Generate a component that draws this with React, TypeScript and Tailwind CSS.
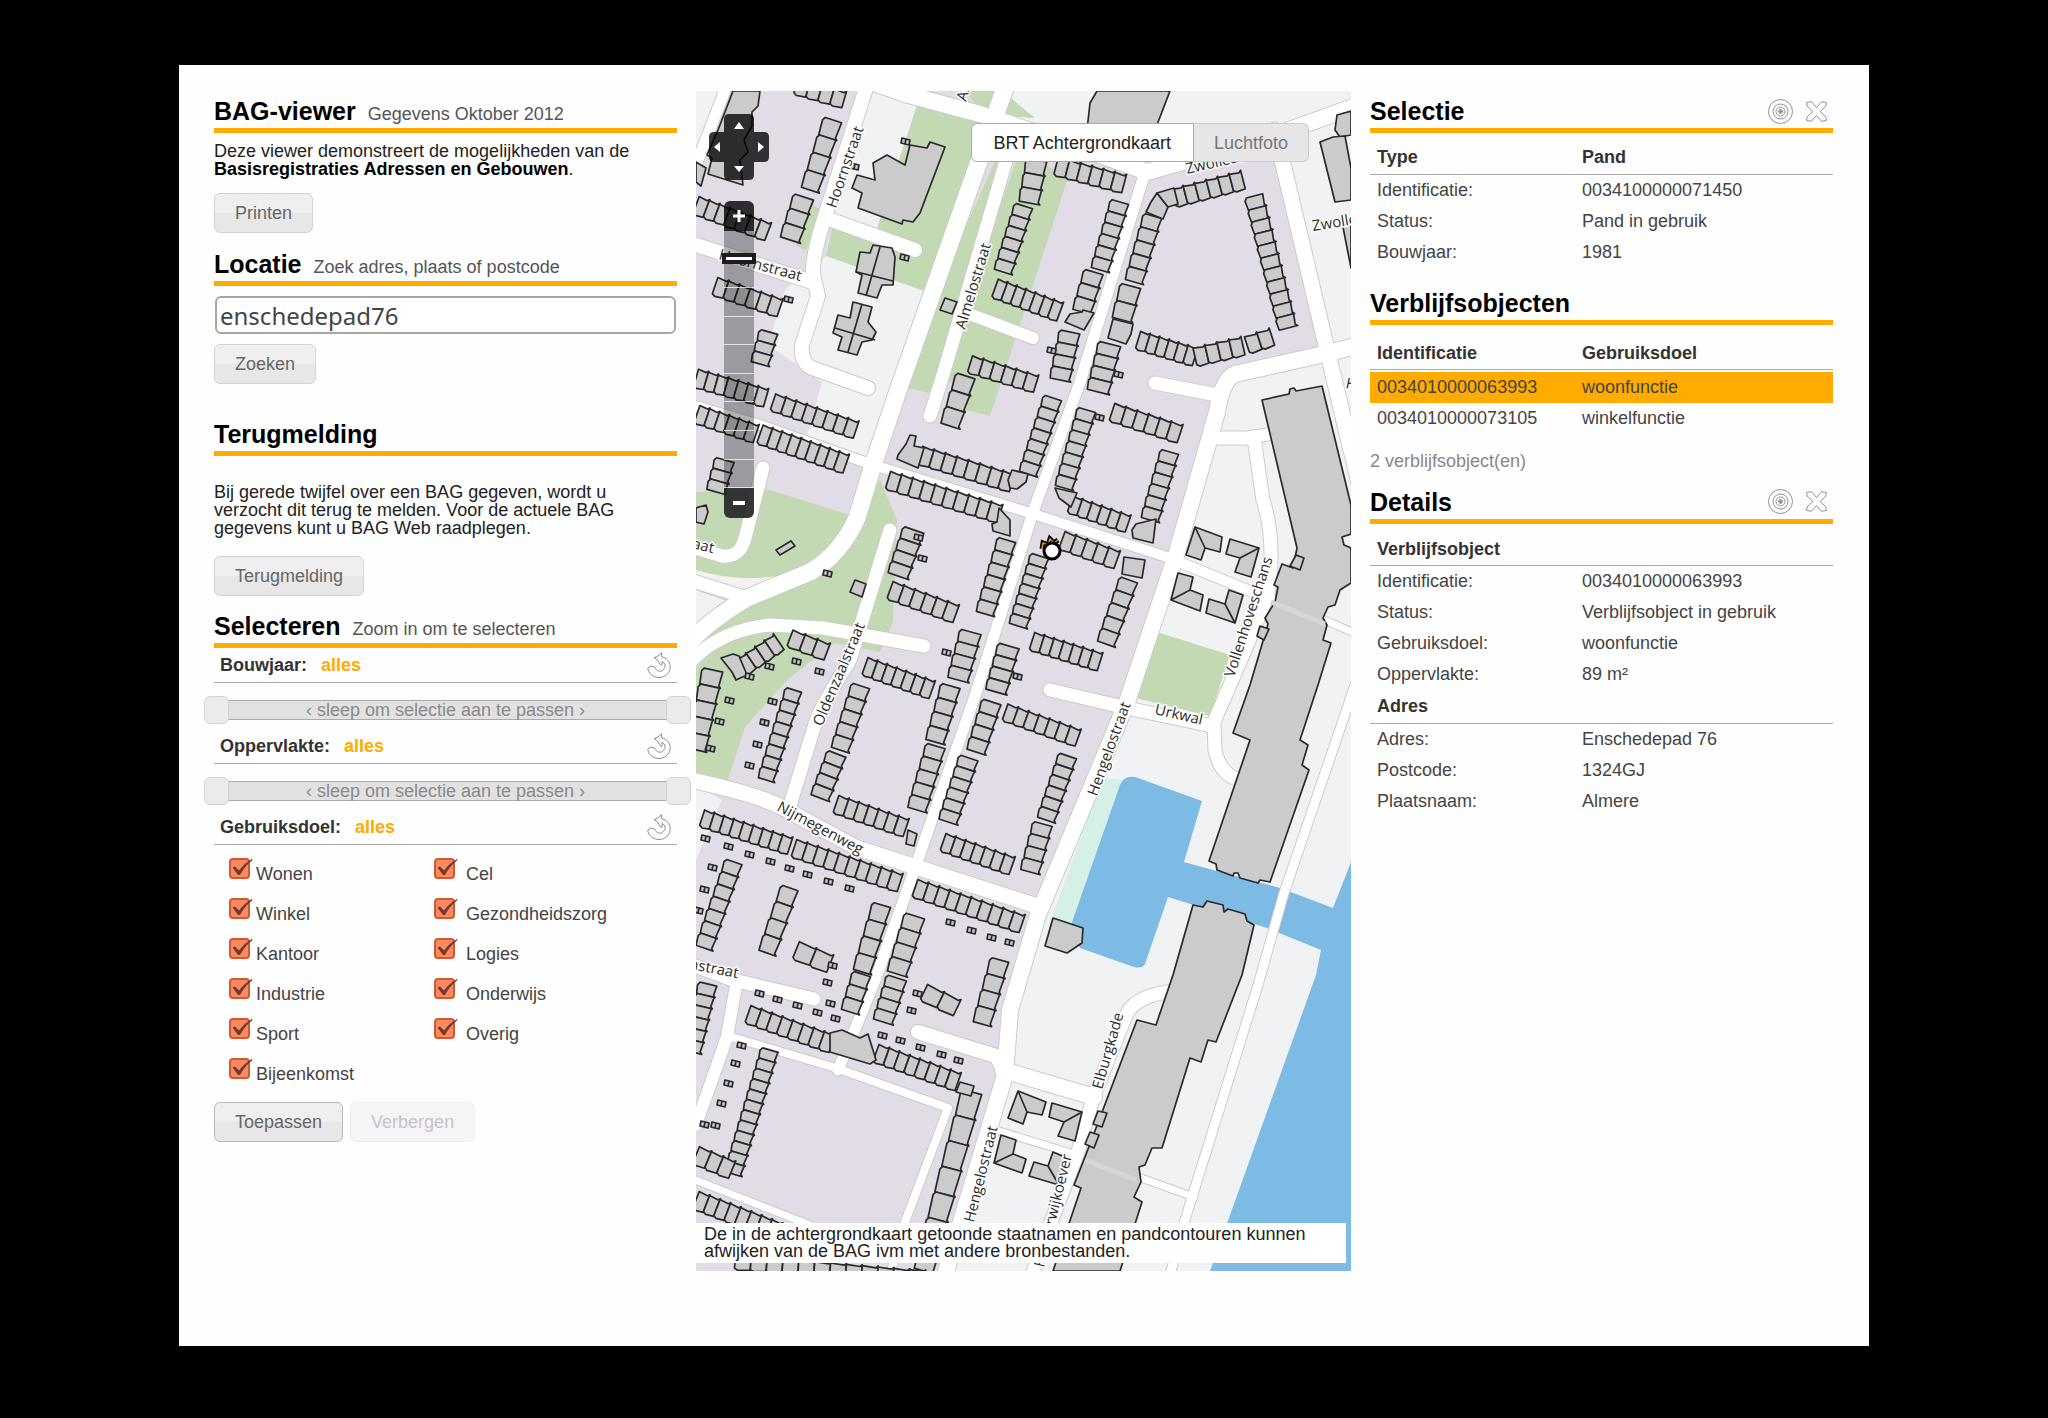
import { useId, useState } from 'react';
import type { ReactNode } from 'react';
import clsx from 'clsx';

type Point = [number, number];

// x1, y1, x2, y2 of the centre line, depth of the houses, number of houses
type Terrace = [number, number, number, number, number, number];

const terraces: Terrace[] = [
  // north west
  [833, 120, 810, 190, 18, 4],
  [804, 197, 790, 240, 20, 3],
  [696, 205, 768, 232, 18, 7],
  [715, 286, 780, 308, 18, 6],
  [769, 332, 760, 364, 18, 3],
  [796, 86, 844, 100, 16, 4],
  [696, 378, 766, 398, 18, 7],
  [773, 402, 856, 430, 17, 8],
  [697, 414, 756, 434, 18, 6],
  [760, 434, 846, 464, 19, 9],
  [725, 460, 716, 492, 19, 3],
  // around Almelostraat
  [1037, 160, 1029, 203, 20, 3],
  [1024, 206, 1003, 272, 18, 6],
  [995, 288, 1060, 312, 19, 7],
  [1056, 166, 1124, 184, 18, 6],
  [1120, 202, 1100, 270, 18, 6],
  [1094, 272, 1082, 312, 19, 3],
  [1070, 332, 1060, 380, 20, 4],
  [970, 364, 1036, 384, 17, 6],
  [966, 376, 950, 426, 19, 3],
  [920, 455, 1012, 483, 18, 8],
  [1053, 398, 1028, 474, 18, 7],
  [888, 480, 1000, 514, 18, 10],
  [1007, 540, 985, 614, 18, 6],
  [914, 530, 898, 576, 21, 4],
  [890, 590, 956, 614, 18, 6],
  // block below Zwollestraat
  [1153, 216, 1134, 282, 18, 5],
  [1131, 286, 1122, 320, 20, 2],
  [1174, 198, 1243, 180, 18, 6],
  [1254, 196, 1288, 328, 18, 11],
  [1138, 340, 1195, 357, 18, 6],
  [1195, 357, 1243, 346, 18, 4],
  [1247, 345, 1272, 337, 17, 2],
  [1110, 344, 1098, 392, 22, 4],
  // centre blocks
  [1087, 410, 1064, 488, 18, 7],
  [1070, 504, 1128, 524, 17, 6],
  [1112, 412, 1180, 434, 18, 6],
  [1170, 452, 1150, 520, 18, 6],
  [1062, 540, 1117, 560, 18, 5],
  [1040, 556, 1018, 626, 18, 7],
  [1129, 580, 1106, 644, 18, 5],
  [1032, 641, 1100, 662, 18, 7],
  [971, 632, 958, 680, 21, 4],
  [1009, 646, 996, 692, 21, 4],
  [865, 666, 932, 690, 18, 7],
  [742, 667, 779, 642, 18, 4],
  [790, 638, 827, 652, 17, 3],
  [861, 686, 840, 750, 18, 5],
  [837, 754, 820, 798, 19, 4],
  [836, 804, 906, 828, 18, 7],
  [951, 686, 935, 742, 19, 4],
  [936, 746, 917, 810, 19, 5],
  [992, 702, 976, 752, 19, 4],
  [969, 758, 948, 822, 19, 6],
  [943, 842, 1012, 866, 18, 7],
  [1005, 712, 1078, 738, 17, 7],
  [1068, 756, 1046, 820, 18, 6],
  [1043, 824, 1030, 872, 19, 4],
  [794, 690, 766, 780, 16, 8],
  [713, 670, 696, 750, 20, 5],
  // below Nijmegenweg
  [702, 818, 790, 846, 17, 9],
  [794, 848, 900, 883, 18, 10],
  [734, 862, 704, 948, 17, 7],
  [790, 888, 767, 953, 17, 4],
  [796, 950, 830, 964, 18, 2],
  [882, 905, 862, 972, 18, 4],
  [862, 974, 850, 1012, 18, 3],
  [915, 888, 1022, 924, 18, 10],
  [915, 916, 897, 974, 20, 4],
  [897, 978, 883, 1022, 20, 4],
  [1000, 960, 982, 1024, 18, 4],
  [924, 992, 957, 1008, 17, 2],
  [748, 1014, 832, 1044, 18, 8],
  [876, 1053, 958, 1082, 18, 8],
  [972, 1092, 924, 1271, 20, 7],
  [770, 1050, 733, 1174, 17, 12],
  [708, 984, 692, 1052, 18, 6],
  [696, 1155, 732, 1170, 18, 3],
  [696, 1200, 800, 1240, 18, 10],
  [735, 1262, 925, 1278, 14, 12],
];

const sheds: Point[] = [
  [906, 141], [855, 166], [905, 257], [789, 299], [730, 700], [720, 721], [711, 748], [773, 701], [765, 722],
  [758, 744], [750, 765], [750, 676], [770, 666], [797, 661], [820, 671], [706, 838], [729, 846], [750, 854],
  [771, 861], [790, 868], [808, 874], [829, 881], [850, 888], [713, 867], [705, 889], [699, 910], [951, 922],
  [972, 930], [992, 937], [1010, 942], [833, 965], [760, 993], [778, 999], [798, 1005], [818, 1012], [836, 1018],
  [883, 1035], [901, 1040], [921, 1047], [942, 1054], [959, 1060], [828, 982], [831, 1003], [918, 993], [912, 1010],
  [742, 1045], [736, 1063], [729, 1083], [722, 1103], [716, 1125], [705, 1124], [1100, 417], [1052, 350], [1119, 374],
  [923, 558], [919, 537], [947, 652], [1018, 676], [828, 573],
];

const landmarks = [
  '733,91 760,91 758,106 752,112 752,126 744,140 748,152 740,160 743,185 708,174 712,158 707,155 718,130',
  '696,162 706,168 701,186 696,182',
  '852,188 857,175 875,180 873,163 887,155 905,165 910,145 927,148 930,142 945,147 920,213 913,222 903,220 902,224 858,208 862,193',
  '873,245 892,248 895,257 893,285 882,285 877,298 858,293 862,275 856,272 860,252 870,253',
  '853,302 872,307 868,322 876,332 872,340 862,342 857,355 838,350 842,337 833,333 838,315 850,318',
  '945,298 957,302 952,314 940,310',
  '1097,91 1170,91 1155,130 1087,130 1090,103',
  '1337,115 1351,111 1351,135 1340,137 1335,130',
  '1320,142 1333,137 1345,136 1351,168 1351,200 1335,202',
  '1342,222 1351,220 1351,268',
  // corner houses
  '898,455 906,444 910,435 916,436 914,446 924,448 918,468 897,459',
  '1157,193 1168,207 1163,219 1146,212 1151,202',
  '1157,193 1174,188 1178,204 1168,207',
  '1113,319 1133,324 1131,334 1126,344 1108,338',
  '1083,310 1094,313 1084,330 1065,322 1070,314 1082,312',
  '999,508 1010,520 1010,536 993,531 992,524 997,522',
  '1055,488 1077,493 1071,507 1059,498',
  '1136,524 1156,519 1153,543 1133,538 1132,530',
  '1124,557 1145,560 1142,578 1122,574',
  '1008,480 1012,470 1028,474 1026,482 1017,489 1010,488',
  '721,658 733,654 739,656 747,675 736,680 732,672',
  '776,550 791,541 795,546 780,555',
  '855,580 866,584 862,597 850,592',
  '696,508 706,505 708,512 704,524 696,522',
  '908,830 917,834 914,846 906,844',
  '1053,918 1083,928 1082,943 1067,953 1045,946',
  '830,1033 842,1030 860,1038 868,1034 876,1060 870,1064 830,1052',
  '960,1082 974,1086 971,1096 956,1092',
];

// long apartment buildings along the quay
const longBuildings = [
  '1262,400 1289,394 1290,389 1294,388 1296,391 1322,386 1351,505 1351,534 1342,537 1344,545 1351,548 1351,583 1340,590 1335,605 1328,607 1323,618 1327,625 1323,640 1331,643 1318,685 1300,740 1308,745 1302,765 1309,770 1270,882 1260,880 1258,883 1240,878 1238,873 1234,873 1233,876 1217,870 1216,864 1209,861 1250,740 1233,733 1250,685 1268,624 1265,618 1275,602 1278,587 1274,585 1282,564 1293,568 1297,548',
  '1193,905 1203,907 1207,901 1223,905 1224,912 1228,909 1245,914 1247,921 1254,925 1242,975 1216,1042 1208,1040 1201,1062 1190,1058 1162,1148 1152,1148 1145,1165 1139,1167 1141,1182 1134,1197 1142,1202 1120,1271 1053,1271 1081,1188 1074,1185 1085,1157 1137,1020 1156,1025 1173,975',
];

const annexes = [
  '1296,555 1304,558 1300,570 1290,566',
  '1260,626 1269,629 1264,640 1257,636',
  '1098,1111 1107,1113 1102,1127 1093,1124',
  '1090,1132 1099,1135 1094,1148 1085,1144',
];

const hipHouses: { outline: string; ridge: string }[] = [
  { outline: '1195,527 1222,537 1220,552 1205,548 1201,560 1186,555', ridge: '1195,527 1205,548' },
  { outline: '1230,539 1259,548 1251,577 1235,572 1240,558 1226,554', ridge: '1259,548 1240,558' },
  { outline: '1178,573 1193,577 1190,590 1203,595 1200,611 1171,600', ridge: '1171,600 1190,590' },
  { outline: '1209,599 1225,604 1229,590 1243,595 1235,623 1206,613', ridge: '1235,623 1225,604' },
  { outline: '1018,1091 1046,1102 1042,1115 1027,1112 1023,1124 1008,1118', ridge: '1018,1091 1027,1112' },
  { outline: '1052,1103 1082,1112 1075,1141 1058,1136 1064,1122 1049,1117', ridge: '1082,1112 1064,1122' },
  { outline: '1001,1135 1016,1140 1013,1154 1026,1159 1022,1173 994,1163', ridge: '994,1163 1013,1154' },
  { outline: '1034,1162 1048,1166 1053,1152 1067,1158 1059,1185 1029,1176', ridge: '1059,1185 1048,1166' },
];

const roads: { d: string; width: number }[] = [
  { d: 'M727 85L694 170', width: 11 },
  { d: 'M867 85L820 232Q812 262 813 274L818 296L802 345Q800 362 812 368L868 388', width: 14 },
  { d: 'M866 80L905 94L980 114Q1060 140 1147 172L1270 137L1356 106', width: 16 },
  { d: 'M1006 85L900 385L873 465L857 518Q840 555 810 572L747 598Q710 620 690 642', width: 17 },
  { d: 'M1015 130L943 375L930 416', width: 13 },
  { d: 'M826 218L915 250', width: 14 },
  { d: 'M690 243L812 282', width: 14 },
  { d: 'M969 314L1033 338', width: 12 },
  { d: 'M1145 172L1080 382L1033 512L977 690L915 868L877 975L853 1034L838 1070', width: 11 },
  { d: 'M1275 130L1330 362L1351 450', width: 15 },
  { d: 'M1356 346L1320 355L1235 374Q1222 380 1217 412L1177 552L1127 702L1038 915L1010 1010L1005 1075L990 1125L945 1275', width: 16 },
  { d: 'M1217 395L1155 383', width: 13 },
  { d: 'M692 405L760 425L873 465L1027 512L1167 557L1272 600', width: 10 },
  { d: 'M763 468L745 538Q740 558 722 556L692 547', width: 13 },
  { d: 'M890 530L850 660Q825 700 817 718L790 805', width: 13 },
  { d: 'M690 662Q720 630 770 625L823 628L924 646', width: 13 },
  { d: 'M690 580L747 598', width: 13 },
  { d: 'M690 780Q760 795 783 808L857 848L913 866L1040 907', width: 15 },
  { d: 'M1050 690L1127 708L1212 726', width: 13 },
  { d: 'M1217 438L1254 438L1263 500Q1276 540 1268 595L1245 650L1214 722L1215 750Q1220 775 1240 780', width: 13 },
  { d: 'M1250 437L1272 434', width: 12 },
  { d: 'M1356 682L1284 893L1258 985L1185 1220L1170 1275', width: 9 },
  { d: 'M1330 380L1356 490', width: 6 },
  { d: 'M1325 620L1356 634', width: 7 },
  { d: 'M1141 1178L1194 1197', width: 7 },
  { d: 'M1173 991Q1132 996 1125 1018L1094 1095L1077 1155L1051 1222L1032 1275', width: 13 },
  { d: 'M1003 1070L1094 1097', width: 16 },
  { d: 'M986 1127L1074 1154', width: 7 },
  { d: 'M918 1032L996 1056L1006 1075', width: 14 },
  { d: 'M690 964L733 980L814 999', width: 13 },
  { d: 'M737 980L727 1037L696 1125', width: 12 },
  { d: 'M728 1036L836 1068L948 1108L905 1222L890 1275', width: 8 },
  { d: 'M690 1178L810 1225', width: 7 },
];

const streetNames: { name: string; x: number; y: number; angle: number }[] = [
  { name: 'Hoornstraat', x: 836, y: 209, angle: -71 },
  { name: 'Hoornstraat', x: 718, y: 259, angle: 15 },
  { name: 'Almelostraat', x: 965, y: 330, angle: -73 },
  { name: 'Almelostraat', x: 966, y: 102, angle: -73 },
  { name: 'Zwollestraat', x: 1187, y: 174, angle: -13 },
  { name: 'Zwollestraat', x: 1313, y: 231, angle: -9 },
  { name: 'Hengelostraat', x: 1097, y: 797, angle: -70 },
  { name: 'Hengelostraat', x: 974, y: 1223, angle: -76 },
  { name: 'Oldenzaalstraat', x: 822, y: 727, angle: -67 },
  { name: 'Vollenhoveschans', x: 1234, y: 678, angle: -72 },
  { name: 'Urkwal', x: 1154, y: 714, angle: 13 },
  { name: 'Elburgkade', x: 1102, y: 1090, angle: -74 },
  { name: 'Harderwijkoever', x: 1044, y: 1268, angle: -76 },
  { name: 'Nijmegenweg', x: 776, y: 810, angle: 28 },
  { name: 'Hoornstraat', x: 654, y: 962, angle: 11 },
  { name: 'Hoornstraat', x: 630, y: 534, angle: 13 },
  { name: 'Hasselt', x: 1345, y: 388, angle: 12 },
];

function TerraceRow({ row }: { row: Terrace }) {
  const [x1, y1, x2, y2, depth, count] = row;
  const length = Math.hypot(x2 - x1, y2 - y1);
  const ux = (x2 - x1) / length;
  const uy = (y2 - y1) / length;
  const step = length / count;
  const half = depth / 2;
  const at = (along: number, across: number) =>
    `${(x1 + ux * along - uy * across).toFixed(1)},${(y1 + uy * along + ux * across).toFixed(1)}`;

  return (
    <>
      {Array.from({ length: count }, (_, i) => {
        const start = i * step;
        const end = start + step;
        const points = [
          at(start, -half),
          at(end - 2, -half + 1),
          at(end, -half - 1),
          at(end, half),
          at(start + 3, half + 1),
          at(start, half - 1),
        ];
        return <polygon key={i} points={points.join(' ')} />;
      })}
    </>
  );
}

function StreetMap() {
  return (
    <svg viewBox="696 91 655 1180" className="block h-auto w-full" role="img" aria-label="Kaart">
      <rect x="696" y="91" width="655" height="1180" fill="#e1dce6" />

      <g fill="#f1f2f4">
        <path d="M696 91H720L696 155Z" />
        <path d="M870 91L925 106L880 232L828 215Z" />
        <path d="M828 255L925 288L870 460L807 435L822 382L768 345L785 290Z" />
        <path d="M995 91H1351V108L1145 172L1010 130Z" />
        <path d="M1280 135L1351 108V352L1330 362Z" />
        <path d="M1351 345L1225 378L1212 420L1127 700L1040 905L1010 1000L1005 1072L950 1271H1351Z" />
        <path d="M696 785L722 800L696 860Z" />
      </g>

      <g fill="#c3d9b3">
        <path d="M917 105L1000 120L975 175L935 295L826 256L835 215L877 228Z" />
        <path d="M965 91H1002L1035 118L985 115Z" />
        <path d="M1000 150L1016 150L940 395L895 385Z" />
        <path d="M1020 150L1068 178L1015 340L990 416L965 410L972 388L940 378Z" />
        <path d="M822 210L806 250L796 246L812 205Z" />
        <path d="M696 492L770 490L850 515L880 480L897 520L893 622L880 652L820 640H696Z" />
        <path d="M696 668L723 640H838L787 680L745 727L726 786L696 780Z" />
        <path d="M1157 632L1230 655L1210 716L1135 698Z" />
      </g>

      <path fill="#f1f2f4" d="M696 570Q735 582 777 576L747 592L696 580ZM696 590L730 602L696 628Z" />
      <path fill="#d5f0e6" d="M1103 778L1122 780L1073 930L1052 917Z" />
      <path
        fill="#7dbae4"
        d="M1120 785Q1124 775 1135 777L1202 801L1184 862L1213 870L1280 888L1333 908L1351 862V1271H1210L1316 975L1321 950L1267 928L1168 897L1145 964Q1142 969 1134 967L1080 948L1071 925Z"
      />

      <g fill="none" strokeLinecap="round" strokeLinejoin="round" stroke="#cfcacb">
        {roads.map((road) => (
          <path key={road.d} d={road.d} strokeWidth={road.width + 2} />
        ))}
      </g>
      <g fill="none" strokeLinecap="round" strokeLinejoin="round" stroke="#fff">
        {roads.map((road) => (
          <path key={road.d} d={road.d} strokeWidth={road.width} />
        ))}
      </g>

      <g fill="#cbcbcc" stroke="#29292b" strokeWidth="1.7" strokeLinejoin="round">
        {longBuildings.map((points) => (
          <polygon key={points} points={points} />
        ))}
        {annexes.map((points) => (
          <polygon key={points} points={points} />
        ))}
        {hipHouses.map((house) => (
          <g key={house.outline}>
            <polygon points={house.outline} />
            <polyline points={house.ridge} />
          </g>
        ))}
        {terraces.map((row) => (
          <TerraceRow key={row.join()} row={row} />
        ))}
        {landmarks.map((points) => (
          <polygon key={points} points={points} />
        ))}
        {sheds.map(([x, y]) => (
          <path key={`${x}-${y}`} d={`M${x - 4} ${y - 3}l8 2l-1 5l-8 -2zm4 1l-1 5`} />
        ))}
        <path fill="none" d="M880 247L866 296M857 272L893 281M862 304L848 352M835 328L875 340" />
      </g>
      <path fill="none" stroke="#d6d6d7" strokeWidth="5" d="M1271 602L1325 624M1085 1160L1136 1180" />

      <g
        className="font-['Open_Sans','Noto_Sans',sans-serif]"
        fontSize="15"
        fill="#2b2b2b"
        stroke="#fff"
        strokeWidth="3"
        strokeLinejoin="round"
        paintOrder="stroke"
      >
        {streetNames.map(({ name, x, y, angle }) => (
          <text key={`${x}-${y}`} x={x} y={y} transform={`rotate(${angle} ${x} ${y})`}>
            {name}
          </text>
        ))}
      </g>

      {/* selected address */}
      <path d="M1042 549L1043 543L1048 545L1050 539L1054 543L1058 540" fill="none" stroke="#000" strokeWidth="5" />
      <path d="M1042 549L1043 543L1048 545L1050 539L1054 543L1058 540" fill="none" stroke="#d99a1c" strokeWidth="1.5" />
      <circle cx="1052" cy="551" r="8" fill="#fff" stroke="#000" strokeWidth="3" />
    </svg>
  );
}

function ResetIcon() {
  return (
    <svg viewBox="0 0 24 26" className="h-[26px] w-6" fill="none" stroke="#8f8b8f" strokeWidth="1" strokeLinejoin="round">
      <path d="M14.500 .7L12.500 3L9 5L7 5.500L10.500 8L14 13.500L15.300 12.500L15 9.500C18.500 11 19 15 16.500 17.500C13.500 20.500 9.500 19.500 7.500 15L4 14L.8 16C1 21 6 25.500 12 25.500C19 25.500 23.500 20 23.200 14.500C23 9.500 19.500 6 14.800 4.800Z" />
    </svg>
  );
}

function TargetIcon() {
  return (
    <svg viewBox="0 0 25 25" className="size-[25px]" fill="none" stroke="#949094">
      <circle cx="12.500" cy="12.500" r="12" />
      <circle cx="12.500" cy="12.500" r="7.500" />
      <circle cx="12.500" cy="12.500" r="4.500" />
      <path d="M12.500 10v5M10 12.500h5" strokeWidth="2" />
    </svg>
  );
}

function CloseIcon() {
  return (
    <svg viewBox="0 0 21 21" className="size-[21px]" fill="none" stroke="#949094" strokeLinejoin="round">
      <path d="M.7 1.500L5.500.7L10.500 6.500L15.500.7L20.300 1.500L20 5L14 10.500L20 16L20.300 19.500L15.500 20.300L10.500 14.500L5.500 20.300L.7 19.500L1 16L7 10.500L1 5Z" />
    </svg>
  );
}

function Heading({ title, note, actions }: { title: string; note?: string; actions?: boolean }) {
  return (
    <div className="flex items-baseline justify-between border-b-[5px] border-[#ffab00] pb-[3px]">
      <div className="flex items-baseline gap-3">
        <h2 className="text-[25px] leading-7 font-bold text-black">{title}</h2>
        {note && <span className="text-lg leading-5 text-[#555]">{note}</span>}
      </div>
      {actions && (
        <div className="flex items-center gap-[13px] self-center pr-[6px]">
          <button type="button" aria-label="Zoom naar selectie">
            <TargetIcon />
          </button>
          <button type="button" aria-label="Sluiten">
            <CloseIcon />
          </button>
        </div>
      )}
    </div>
  );
}

function Button({ children, disabled, strong }: { children: ReactNode; disabled?: boolean; strong?: boolean }) {
  return (
    <button
      type="button"
      disabled={disabled}
      className={clsx(
        'block h-10 rounded-md border px-5 text-lg leading-6',
        disabled
          ? 'border-[#f0eef0] bg-[#f6f4f6] text-[#c6c4c6]'
          : 'bg-linear-to-b from-[#efefef] from-50% to-[#e7e7e7] to-50% text-[#666]',
        !disabled && (strong ? 'border-[#bbb7bb] text-[#555]' : 'border-[#d3d3d3]'),
      )}
    >
      {children}
    </button>
  );
}

function FilterRow({ label }: { label: string }) {
  return (
    <div className="flex h-[35px] items-center justify-between border-b border-[#aaa6aa] pr-[6px] pl-[6px]">
      <div className="flex gap-[14px] text-lg font-bold">
        <span className="text-[#333]">{label}:</span>
        <span className="text-[#ffab00]">alles</span>
      </div>
      <button type="button" aria-label={`${label} herstellen`}>
        <ResetIcon />
      </button>
    </div>
  );
}

const thumb =
  'pointer-events-none absolute inset-x-0 inset-y-0 m-0 h-full w-full appearance-none bg-transparent [&::-webkit-slider-thumb]:pointer-events-auto [&::-webkit-slider-thumb]:h-7 [&::-webkit-slider-thumb]:w-[25px] [&::-webkit-slider-thumb]:appearance-none [&::-webkit-slider-thumb]:rounded-md [&::-webkit-slider-thumb]:border [&::-webkit-slider-thumb]:border-[#d3d3d3] [&::-webkit-slider-thumb]:bg-[#ebebeb]';

function RangeSlider({ label }: { label: string }) {
  return (
    <div className="relative mt-[17px] mb-[9px] h-5 border-y border-[#aaa] bg-[#e2e1e2] text-center text-lg leading-[18px] text-[#8a8a8a]">
      ‹ sleep om selectie aan te passen ›
      <div className="absolute -inset-y-1 -right-[14px] -left-[10px]">
        <input type="range" aria-label={`${label} vanaf`} defaultValue={0} className={thumb} />
        <input type="range" aria-label={`${label} tot`} defaultValue={100} className={thumb} />
      </div>
    </div>
  );
}

function Checkbox({ label, wide }: { label: string; wide?: boolean }) {
  const id = useId();
  const [checked, setChecked] = useState(true);

  return (
    <div className={clsx('flex h-10 items-start', wide ? 'gap-2' : 'gap-[3px]')}>
      <span className="relative h-[21px] w-6">
        <input
          id={id}
          type="checkbox"
          checked={checked}
          onChange={() => setChecked(!checked)}
          className="block size-[21px] appearance-none rounded border-2 border-[#d2592f] bg-[#fb8a62]"
        />
        {checked && (
          <svg viewBox="0 0 24 21" className="pointer-events-none absolute inset-0 h-[21px] w-6">
            <path d="M3.500 9.500L6 8.500L10 12.500Q15 5.500 23 1L23.500 2Q15 9 11 17L9 17Z" fill="#713a2c" />
          </svg>
        )}
      </span>
      <label htmlFor={id} className="mt-[6px] text-lg leading-5 text-[#444]">
        {label}
      </label>
    </div>
  );
}

function SectionTable({ head, rows, active }: { head: [string, string?]; rows: [string, string][]; active?: number }) {
  return (
    <table className="w-full table-fixed border-collapse text-left text-lg">
      <thead>
        <tr className="h-[33px] border-b border-[#aaa6aa] text-[#333]">
          <th className="w-[212px] pl-[7px] leading-8" colSpan={head[1] ? 1 : 2}>
            {head[0]}
          </th>
          {head[1] && <th className="leading-8">{head[1]}</th>}
        </tr>
      </thead>
      <tbody className="text-[#444]">
        {active !== undefined && (
          <tr aria-hidden="true">
            <td className="h-[2px] w-[212px]" />
            <td />
          </tr>
        )}
        {rows.map(([name, value], i) => (
          <tr key={name} className={clsx(i === active && 'bg-[#ffab00]')}>
            <td className="w-[212px] pl-[7px] leading-[31px]">{name}</td>
            <td className="leading-[31px]">{value}</td>
          </tr>
        ))}
      </tbody>
    </table>
  );
}

function DetailTable({ groups }: { groups: { title: string; rows: [string, string][] }[] }) {
  return (
    <table className="w-full table-fixed border-collapse text-left text-lg text-[#444]">
      <colgroup>
        <col className="w-[212px]" />
        <col />
      </colgroup>
      {groups.map((group) => (
        <tbody key={group.title}>
          <tr className="h-[33px] border-b border-[#aaa6aa] text-[#333]">
            <th colSpan={2} className="pl-[7px] leading-8">
              {group.title}
            </th>
          </tr>
          {group.rows.map(([name, value]) => (
            <tr key={name}>
              <td className="pl-[7px] leading-[31px]">{name}</td>
              <td className="leading-[31px]">{value}</td>
            </tr>
          ))}
        </tbody>
      ))}
    </table>
  );
}

function PanControl() {
  return (
    <div className="absolute top-[23px] left-[13px] h-[66px] w-[60px]">
      <svg viewBox="0 0 60 66" className="absolute inset-0 h-full w-full">
        <path
          fill="#000"
          fillOpacity=".78"
          d="M20 0H40Q45 0 45 5V18H55Q60 18 60 23V43Q60 48 55 48H45V61Q45 66 40 66H20Q15 66 15 61V48H5Q0 48 0 43V23Q0 18 5 18H15V5Q15 0 20 0Z"
        />
        <path fill="#fff" d="M30 8L35 15H25ZM30 58L35 52H25ZM5 33L11 28V38ZM55 33L49 28V38Z" />
      </svg>
      <button type="button" aria-label="Omhoog" className="absolute top-0 left-[15px] h-[18px] w-[30px]" />
      <button type="button" aria-label="Omlaag" className="absolute bottom-0 left-[15px] h-[18px] w-[30px]" />
      <button type="button" aria-label="Links" className="absolute top-[18px] left-0 h-[30px] w-[15px]" />
      <button type="button" aria-label="Rechts" className="absolute top-[18px] right-0 h-[30px] w-[15px]" />
    </div>
  );
}

function ZoomControl() {
  return (
    <div className="absolute top-[110px] left-[28px] flex w-[30px] flex-col">
      <button type="button" aria-label="Inzoomen" className="flex h-[30px] items-center justify-center rounded-t-md bg-black/80">
        <svg viewBox="0 0 14 14" className="size-[14px]">
          <path d="M7 1v12M1 7h12" stroke="#fff" strokeWidth="3" />
        </svg>
      </button>
      <div className="relative flex h-[257px] flex-col divide-y divide-white/70">
        {Array.from({ length: 9 }, (_, i) => (
          <span key={i} className="flex-1 bg-black/30" />
        ))}
        <input
          type="range"
          aria-label="Zoomniveau"
          defaultValue={9}
          className="absolute inset-y-0 -left-[2px] m-0 h-full w-[34px] appearance-none bg-transparent [writing-mode:vertical-lr] [&::-webkit-slider-thumb]:h-[11px] [&::-webkit-slider-thumb]:w-[34px] [&::-webkit-slider-thumb]:appearance-none [&::-webkit-slider-thumb]:border-4 [&::-webkit-slider-thumb]:border-[#1c1c1c] [&::-webkit-slider-thumb]:bg-white"
        />
      </div>
      <button type="button" aria-label="Uitzoomen" className="flex h-[30px] items-center justify-center rounded-b-md bg-[#222]/90">
        <svg viewBox="0 0 14 14" className="size-[14px]">
          <path d="M1 7h12" stroke="#fff" strokeWidth="4" />
        </svg>
      </button>
    </div>
  );
}

const leftUses = ['Wonen', 'Winkel', 'Kantoor', 'Industrie', 'Sport', 'Bijeenkomst'];
const rightUses = ['Cel', 'Gezondheidszorg', 'Logies', 'Onderwijs', 'Overig'];

export default function App() {
  const [layer, setLayer] = useState<'brt' | 'foto'>('brt');

  return (
    <div className="min-h-screen bg-black px-[179px] pt-[65px] pb-[72px] font-['Liberation_Sans',Arial,sans-serif]">
      <main className="grid grid-cols-[463fr_655fr_463fr] gap-[19px] bg-[#fefefe] pt-[26px] pr-9 pb-[75px] pl-[35px]">
        <div className="min-w-0 pt-[6px]">
          <Heading title="BAG-viewer" note="Gegevens Oktober 2012" />
          <p className="mt-[9px] mb-[15px] text-lg leading-[18px] text-[#222]">
            Deze viewer demonstreert de mogelijkheden van de
            <br />
            <strong className="text-black">Basisregistraties Adressen en Gebouwen</strong>.
          </p>
          <Button>Printen</Button>

          <form className="mt-[17px]" onSubmit={(e) => e.preventDefault()}>
            <Heading title="Locatie" note="Zoek adres, plaats of postcode" />
            <div className="px-px pt-[10px] pb-[10px]">
              <input
                type="text"
                aria-label="Zoek adres, plaats of postcode"
                defaultValue="enschedepad76"
                className="block h-[38px] w-full rounded-md border-2 border-[#aaa5a2] bg-white px-[3px] font-['Noto_Sans',sans-serif] text-2xl text-[#444]"
              />
            </div>
            <Button>Zoeken</Button>
          </form>

          <section className="mt-9">
            <Heading title="Terugmelding" />
            <p className="mt-[27px] mb-[19px] text-lg leading-[18px] text-[#222]">
              Bij gerede twijfel over een BAG gegeven, wordt u
              <br />
              verzocht dit terug te melden. Voor de actuele BAG
              <br />
              gegevens kunt u BAG Web raadplegen.
            </p>
            <Button>Terugmelding</Button>
          </section>

          <section className="mt-4">
            <Heading title="Selecteren" note="Zoom in om te selecteren" />
            <FilterRow label="Bouwjaar" />
            <RangeSlider label="Bouwjaar" />
            <FilterRow label="Oppervlakte" />
            <RangeSlider label="Oppervlakte" />
            <FilterRow label="Gebruiksdoel" />
            <div className="grid grid-cols-[205px_1fr] pt-[13px] pb-1 pl-[15px]">
              <div>
                {leftUses.map((use) => (
                  <Checkbox key={use} label={use} />
                ))}
              </div>
              <div>
                {rightUses.map((use) => (
                  <Checkbox key={use} label={use} wide />
                ))}
              </div>
            </div>
            <div className="flex gap-[7px]">
              <Button strong>Toepassen</Button>
              <Button disabled>Verbergen</Button>
            </div>
          </section>
        </div>

        <div className="relative min-w-0 self-start overflow-hidden">
          <StreetMap />
          <PanControl />
          <ZoomControl />
          <div className="absolute top-8 right-[42px] flex text-lg">
            <button
              type="button"
              onClick={() => setLayer('brt')}
              className={clsx(
                'h-[39px] rounded-l-md border border-[#aaa] px-[22px]',
                layer === 'brt' ? 'bg-white text-[#222]' : 'bg-[#e6e6e6] text-[#666]',
              )}
            >
              BRT Achtergrondkaart
            </button>
            <button
              type="button"
              onClick={() => setLayer('foto')}
              className={clsx(
                'h-[39px] rounded-r-md border border-l-0 border-[#ccc] px-5',
                layer === 'foto' ? 'bg-white text-[#222]' : 'bg-[#e6e6e6] text-[#777]',
              )}
            >
              Luchtfoto
            </button>
          </div>
          <p className="absolute right-[5px] bottom-2 left-0 bg-white px-2 py-[3px] text-lg leading-[17px] text-[#222]">
            De in de achtergrondkaart getoonde staatnamen en pandcontouren kunnen
            <br />
            afwijken van de BAG ivm met andere bronbestanden.
          </p>
        </div>

        <div className="min-w-0 pt-[6px]">
          <Heading title="Selectie" actions />
          <div className="mt-2 mb-[21px]">
            <SectionTable
              head={['Type', 'Pand']}
              rows={[
                ['Identificatie:', '0034100000071450'],
                ['Status:', 'Pand in gebruik'],
                ['Bouwjaar:', '1981'],
              ]}
            />
          </div>

          <Heading title="Verblijfsobjecten" />
          <div className="mt-3">
            <SectionTable
              head={['Identificatie', 'Gebruiksdoel']}
              active={0}
              rows={[
                ['0034010000063993', 'woonfunctie'],
                ['0034010000073105', 'winkelfunctie'],
              ]}
            />
          </div>
          <p className="mt-[11px] mb-[11px] text-lg leading-8 text-[#888]">2 verblijfsobject(en)</p>

          <Heading title="Details" actions />
          <div className="mt-[9px]">
            <DetailTable
              groups={[
                {
                  title: 'Verblijfsobject',
                  rows: [
                    ['Identificatie:', '0034010000063993'],
                    ['Status:', 'Verblijfsobject in gebruik'],
                    ['Gebruiksdoel:', 'woonfunctie'],
                    ['Oppervlakte:', '89 m²'],
                  ],
                },
                {
                  title: 'Adres',
                  rows: [
                    ['Adres:', 'Enschedepad 76'],
                    ['Postcode:', '1324GJ'],
                    ['Plaatsnaam:', 'Almere'],
                  ],
                },
              ]}
            />
          </div>
        </div>
      </main>
    </div>
  );
}
